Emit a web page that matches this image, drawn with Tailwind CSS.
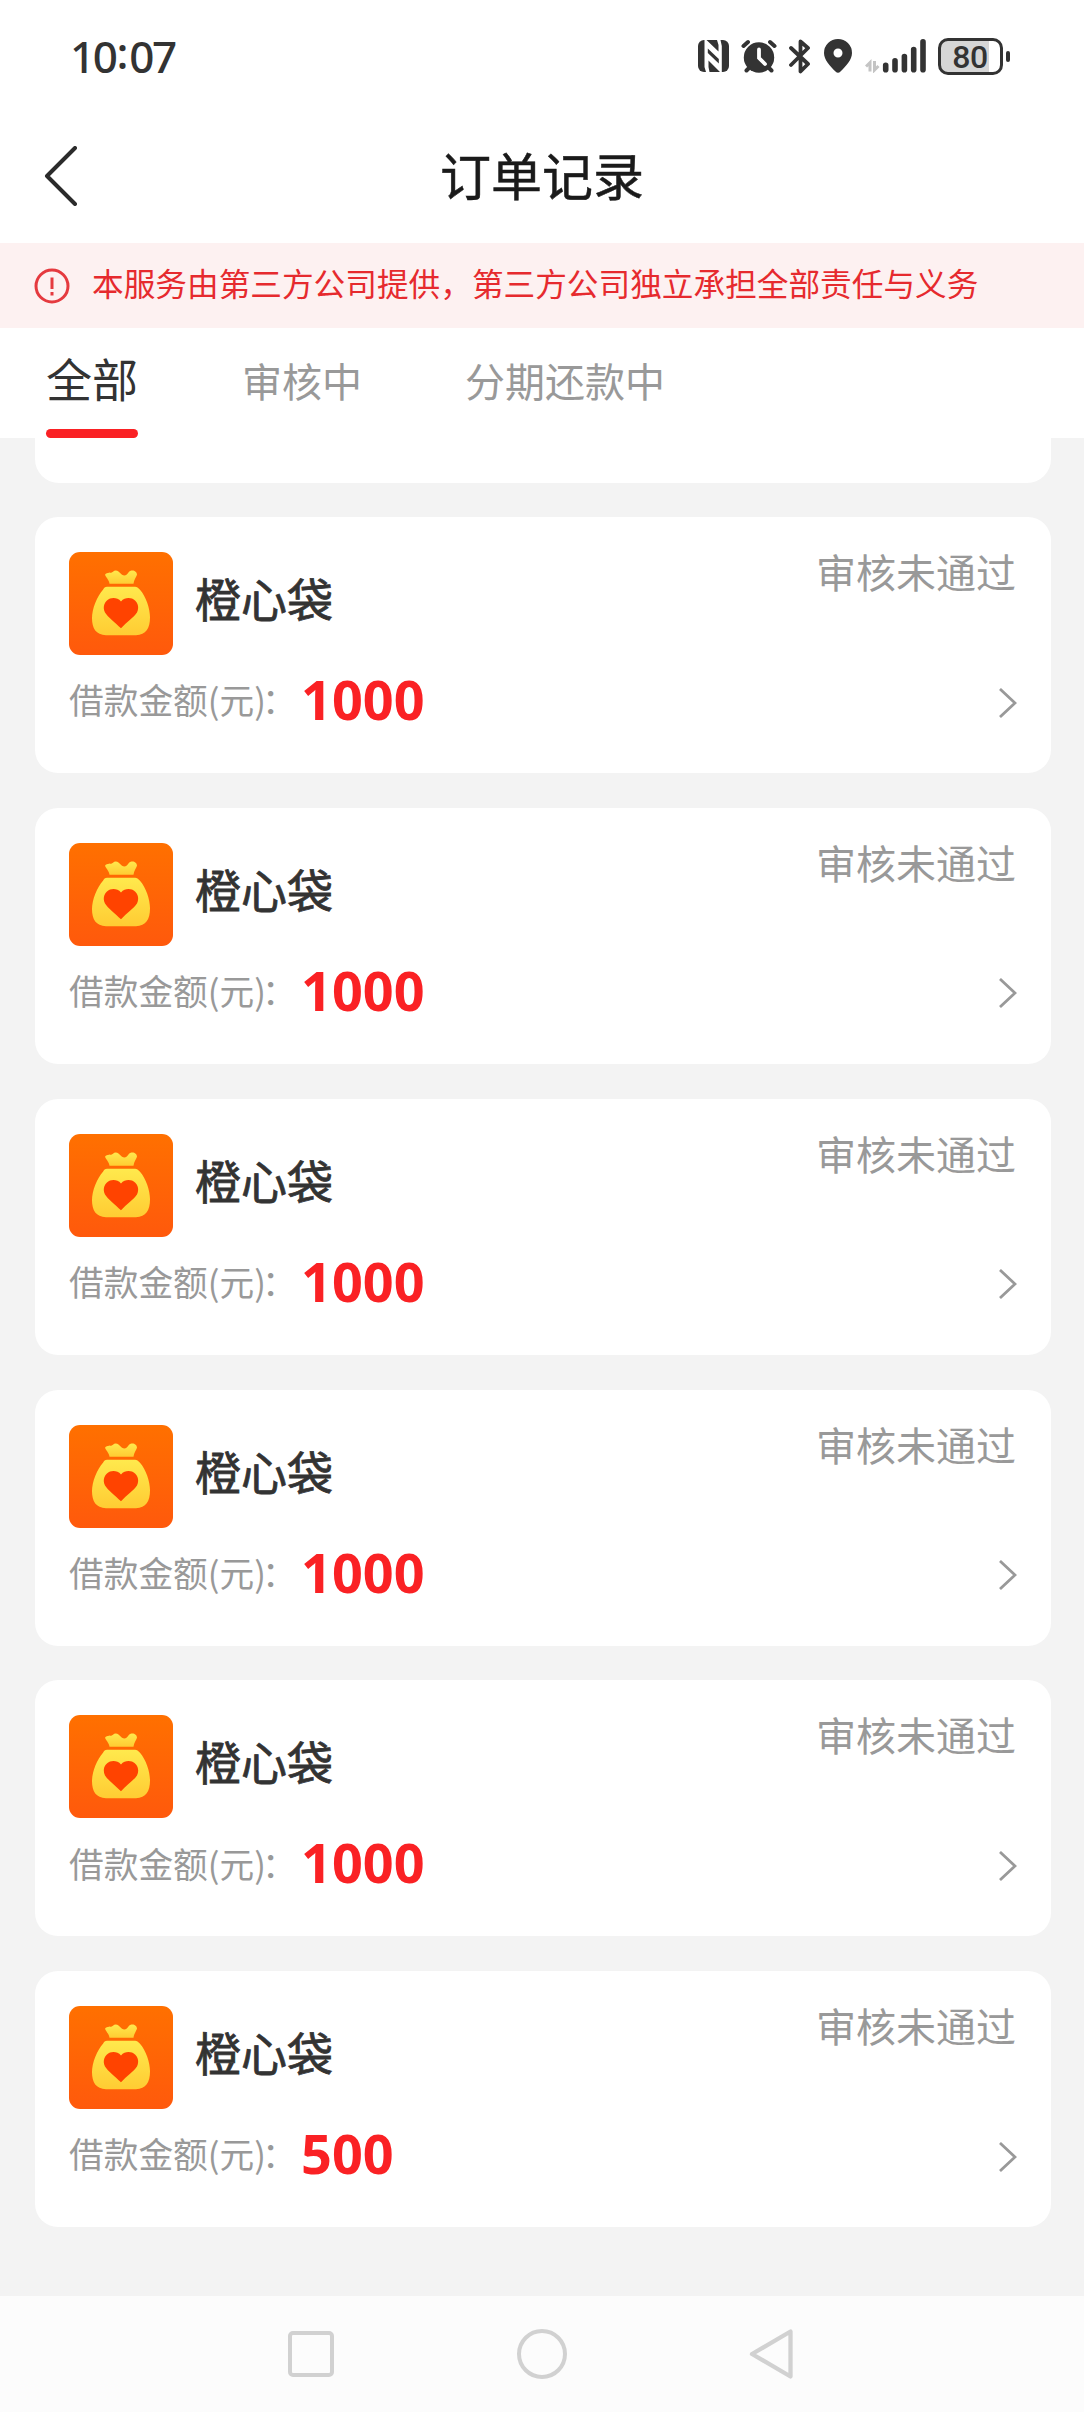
<!DOCTYPE html>
<html lang="zh-CN">
<head>
<meta charset="utf-8">
<title>订单记录</title>
<script src="https://cdn.jsdelivr.net/npm/@tailwindcss/browser@4"></script>
</head>
<body class="bg-[#f3f3f3] font-['Noto_Sans_CJK_SC',sans-serif]">
<div class="w-[1084px] h-[2412px] flex flex-col overflow-hidden">
  <header class="bg-white shrink-0">
    <div class="h-[112px] flex items-center justify-between pl-[70px] pr-[74px]">
      <span class="font-['Noto_Sans','Noto_Sans_CJK_SC',sans-serif] font-medium text-[44px] leading-none tracking-[-2.400px] text-[#333] pb-[1px]">10<span class="inline-block -translate-y-[4px] pl-[1px] pr-[3px]">:</span>07</span>
      <div class="flex items-center text-[#333]">
        <svg class="w-[31px] h-[32px]" viewBox="0 0 31 32"><rect width="31" height="32" rx="6" fill="#333"/><path fill="#fff" d="M6.500 0H8.500L20.500 11.500V5L19 0H22.500L23.800 6V32H22L10.500 20.500V27L11.500 32H8L6.500 27Z"/><path fill="#333" d="M9.800 8.500L20.800 19V23.500L9.800 13Z"/></svg>
        <svg class="w-[36px] h-[34px] ml-[12px]" viewBox="0 0 36 34" fill="none" stroke="#333" stroke-width="4" stroke-linecap="round"><circle cx="18" cy="18.500" r="15.200" fill="#333" stroke="none"/><path d="M2.500 7L7 3M33.500 7L29 3M8 29L5.500 31.500M28 29L30.500 31.500"/><path d="M18 10.500V19L24 25" stroke="#fff" stroke-width="3.800"/></svg>
        <svg class="w-[22px] h-[35px] ml-[12px]" viewBox="0 0 22 35" fill="none" stroke="#333" stroke-width="3.800" stroke-linejoin="round" stroke-linecap="round"><path d="M2 9L19 25L11.500 32.500V2.500L19 9L2 26"/></svg>
        <svg class="w-[28px] h-[34px] ml-[13px]" viewBox="0 0 28 34" fill="#333"><path fill-rule="evenodd" d="M14 0A14 14 0 0 1 28 14C28 21 22 27 16.500 32.500Q14 35 11.500 32.500C6 27 0 21 0 14A14 14 0 0 1 14 0ZM14 9.500A4.500 4.500 0 1 0 14 18.500A4.500 4.500 0 1 0 14 9.500Z"/></svg>
        <svg class="w-[61px] h-[34px] ml-[13px]" viewBox="0 0 61 34" fill="none"><path d="M5 32.500V23.500L1 27.500M9.500 22V31L13.500 27" stroke="#c4c4c4" stroke-width="3"/><path d="M20.700 26.200V30.700M30 21.900V30.700M39.400 17.600V30.700M48.700 10.600V30.700M58 2.900V30.700" stroke="#333" stroke-width="5.600" stroke-linecap="round"/></svg>
        <div class="relative w-[65px] h-[37px] ml-[12px] rounded-[10px] border-[3px] border-[#333] bg-[linear-gradient(to_right,#d6d6d6_81%,#fff_81%)] flex items-center justify-center">
          <span class="font-['Roboto',sans-serif] font-medium text-[32px] leading-none tracking-[-0.500px] text-[#333] pt-[1px] pr-[1px]">80</span>
        </div>
        <div class="w-[4px] h-[11px] ml-[3px] rounded-full bg-[#333]"></div>
      </div>
    </div>
    <div class="h-[131px] grid grid-cols-[1fr_auto_1fr] items-center px-[44px] pb-[3px]">
      <svg class="w-[34px] h-[60px]" viewBox="0 0 34 60" fill="none" stroke="#2b2b2b" stroke-width="4" stroke-linecap="round" stroke-linejoin="round"><path d="M31 2L3 30L31 58"/></svg>
      <h1 class="text-[51px] leading-none text-[#1a1a1a] pb-[3px] [-webkit-text-stroke:0.500px_#1a1a1a]">订单记录</h1>
    </div>
    <div class="h-[85px] bg-[#fdf1f1] flex items-center pl-[34px]">
      <svg class="w-[36px] h-[36px] shrink-0" viewBox="0 0 36 36" fill="none" stroke="#e53a3f" stroke-width="3"><circle cx="18" cy="18" r="16"/><path d="M18 9.500V21M18 24V27.500"/></svg>
      <p class="ml-[22px] pb-[5px] text-[31.670px] leading-none text-[#e62a2e] whitespace-nowrap">本服务由第三方公司提供，第三方公司独立承担全部责任与义务</p>
    </div>
    <nav class="h-[110px] flex items-end pl-[46px] text-[40px] leading-none text-[#999]">
      <div class="w-[92px] flex flex-col gap-[29px]">
        <span class="text-[46px] leading-none text-[#333]">全部</span>
        <span class="h-[9px] rounded-full bg-[#fa2124]"></span>
      </div>
      <span class="ml-[104px] pb-[38px]">审核中</span>
      <span class="ml-[103px] pb-[38px]">分期还款中</span>
    </nav>
  </header>

  <main id="orders" class="flex-1 px-[35px]">
    <div class="h-[45px] mb-[34px] mr-[-2px] bg-white rounded-b-[24px]"></div>
  </main>

  <footer class="h-[116px] shrink-0 bg-[#fcfcfc] flex justify-between items-center pl-[288px] pr-[291px]">
    <div class="w-[46px] h-[46px] rounded-[5px] border-[4px] border-[#d1d1d1]"></div>
    <div class="w-[50px] h-[50px] rounded-full border-[4px] border-[#d1d1d1]"></div>
    <svg class="w-[44px] h-[50px]" viewBox="0 0 44 50" fill="none" stroke="#d1d1d1" stroke-width="4.300" stroke-linejoin="round"><path d="M41.500 2.500V47.500L3 25Z"/></svg>
  </footer>
</div>

<template id="card">
  <article class="h-[256px] mb-[34.850px] mr-[-2px] bg-white rounded-[23px] pl-[34px] pr-[34px] pt-[35px]">
    <div class="flex">
      <svg class="w-[104px] h-[103px] shrink-0" viewBox="0 0 104 104" preserveAspectRatio="none">
        <defs>
          <linearGradient id="tile" x2="0" y2="1"><stop stop-color="#ff7000"/><stop offset="1" stop-color="#ff590c"/></linearGradient>
          <linearGradient id="bag" x2="0" y2="1"><stop stop-color="#ffe94d"/><stop offset="1" stop-color="#ffcc33"/></linearGradient>
        </defs>
        <rect width="104" height="104" rx="11" fill="url(#tile)"/>
        <path fill="url(#bag)" d="M36 23C38 20 42 22 44 20C47 17 50 20 53 23C56 25 58 23 60 20C63 17 68 19 68 23C67 26 65 28 64.500 32H40.500C40 28 37 26 36 23Z"/>
        <path fill="url(#bag)" d="M38 35H66C68 35 69 36 71 38C77 45 81 57 81 66C81 77 77 84 67 84H37C27 84 23 77 23 67C23 57 28 45 34 38C35 36 36 35 38 35Z"/>
        <path fill="#ff4300" d="M52 50C55 46 60 46 63 47C68 49 71 55 68 61C65 66 57 71 52 77C46 71 39 66 36 61C33 55 36 49 41 47C44 46 49 46 52 50Z"/>
      </svg>
      <h2 class="ml-[22px] mt-[22px] text-[46px] leading-none text-[#333] [-webkit-text-stroke:0.800px_#333]">橙心袋</h2>
      <span class="ml-auto -mt-[1px] pr-[1px] text-[40px] leading-none text-[#999]">审核未通过</span>
    </div>
    <div class="flex items-center h-[54px] mt-[18px]">
      <span class="text-[34.700px] leading-none text-[#999] w-[232px] whitespace-nowrap pb-[1px]">借款金额(元)<span class="-ml-[4px]">：</span></span>
      <b class="font-['Noto_Sans',sans-serif] font-bold text-[54px] leading-none text-[#fa2124] pb-[2px]"></b>
      <svg class="ml-auto mt-[5px] w-[18px] h-[30px]" viewBox="0 0 18 30" fill="none" stroke="#999" stroke-width="2.800"><path d="M1 1L16 15L1 29"/></svg>
    </div>
  </article>
</template>
<script>
  const list = document.getElementById('orders');
  for (const amount of [1000, 1000, 1000, 1000, 1000, 500]) {
    const node = document.getElementById('card').content.cloneNode(true);
    node.querySelector('b').textContent = amount;
    list.appendChild(node);
  }
</script>
</body>
</html>
